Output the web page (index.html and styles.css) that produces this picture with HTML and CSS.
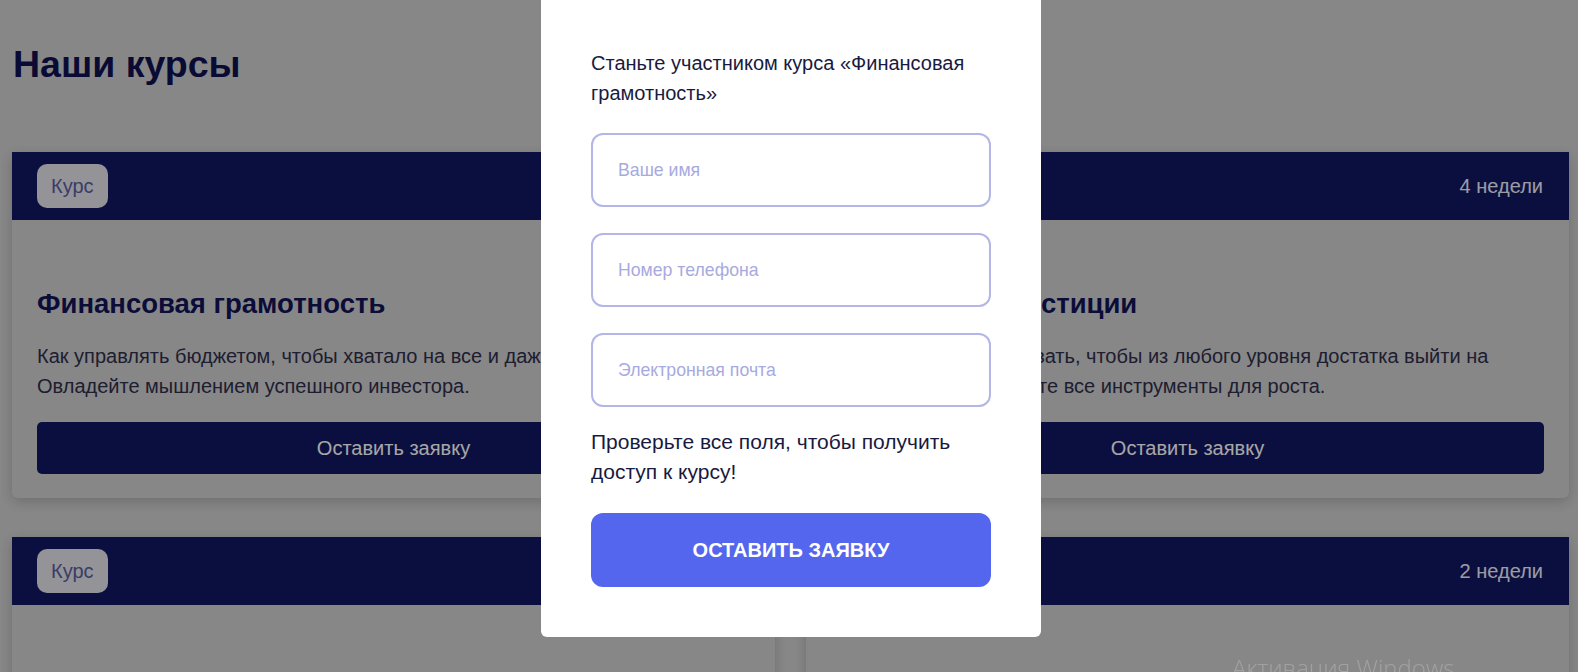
FILE: index.html
```html
<!DOCTYPE html>
<html lang="ru">
<head>
  <meta charset="UTF-8" />
  <meta name="viewport" content="width=device-width, initial-scale=1.0" />
  <title>Наши курсы</title>
  <link rel="stylesheet" href="styles.css">
</head>
<body>
  <div class="page">
    <h1 class="page-title">Наши курсы</h1>

    <div class="courses">
      <div class="course">
        <div class="course-head">
          <span class="course-tag">Курс</span>
          <span class="course-time">6 недель</span>
        </div>
        <div class="course-body">
          <h2>Финансовая грамотность</h2>
          <p>Как управлять бюджетом, чтобы хватало на все и даже на путешествия. Овладейте мышлением успешного инвестора.</p>
          <button class="course-btn">Оставить заявку</button>
        </div>
      </div>

      <div class="course">
        <div class="course-head">
          <span class="course-tag">Курс</span>
          <span class="course-time">4 недели</span>
        </div>
        <div class="course-body">
          <h2>Разумные инвестиции</h2>
          <p>Как удачно инвестировать, чтобы из любого уровня достатка выйти на высокий доход. Освойте все инструменты для роста.</p>
          <button class="course-btn">Оставить заявку</button>
        </div>
      </div>

      <div class="course">
        <div class="course-head">
          <span class="course-tag">Курс</span>
          <span class="course-time">3 недели</span>
        </div>
        <div class="course-body">
          <h2>Личный бюджет</h2>
          <p>Как планировать расходы и копить без стресса. Составьте свой первый финансовый план.</p>
          <button class="course-btn">Оставить заявку</button>
        </div>
      </div>

      <div class="course">
        <div class="course-head">
          <span class="course-tag">Курс</span>
          <span class="course-time">2 недели</span>
        </div>
        <div class="course-body">
          <h2>Налоги и вычеты</h2>
          <p>Как вернуть часть уплаченных налогов и не переплачивать. Разберитесь в вычетах за один вечер.</p>
          <button class="course-btn">Оставить заявку</button>
        </div>
      </div>
    </div>
  </div>

  <div class="overlay">
    <form class="modal">
      <p class="modal-title">Станьте участником курса «Финансовая грамотность»</p>
      <div class="fields">
        <input class="field" type="text" placeholder="Ваше имя">
        <input class="field" type="tel" placeholder="Номер телефона">
        <input class="field" type="email" placeholder="Электронная почта">
      </div>
      <p class="modal-note">Проверьте все поля, чтобы получить доступ к курсу!</p>
      <button class="modal-btn" type="button">Оставить заявку</button>
    </form>
  </div>

  <div class="watermark">Активация Windows</div>
</body>
</html>
```

FILE: styles.css
```css
body {
  margin: 0;
  font-family: 'Liberation Sans', Arial, sans-serif;
  background: #d0d0d0;
}

.page {
  padding: 42px 9px 40px 12px;
}
.page-title {
  margin: 0 0 66px 1px;
  font-size: 37.5px;
  line-height: 44px;
  color: #0f1252;
}

.courses {
  display: grid;
  grid-template-columns: 1fr 1fr;
  column-gap: 31px;
  row-gap: 39px;
}
.course {
  background: #d0d0d0;
  border-radius: 0 0 6px 6px;
  box-shadow: 0 4px 14px rgba(0, 0, 0, 0.18);
  overflow: hidden;
}
.course-head {
  height: 68px;
  padding: 0 26px 0 25px;
  background: #121762;
  display: flex;
  align-items: center;
  justify-content: space-between;
}
.course-tag {
  padding: 10px 14px;
  border-radius: 10px;
  background: #e3e3ea;
  color: #5a5e9e;
  font-size: 20px;
  line-height: 24px;
}
.course-time {
  color: #f0f0fa;
  font-size: 20px;
}
.course-body {
  padding: 68px 25px 24px;
}
.course-body h2 {
  margin: 0 0 22px;
  font-size: 27.5px;
  line-height: 31px;
  color: #111557;
}
.course-body p {
  margin: 0 0 21px;
  font-size: 20px;
  line-height: 30px;
  color: #2e2e4a;
}
.course-btn {
  display: block;
  width: 100%;
  height: 52px;
  border: none;
  border-radius: 5px;
  background: #121762;
  color: #fff;
  font-family: 'Liberation Sans', Arial, sans-serif;
  font-size: 20px;
}

.overlay {
  position: fixed;
  top: 0;
  right: 0;
  bottom: 0;
  left: 0;
  background: rgba(0, 0, 0, 0.35);
  display: flex;
  justify-content: center;
  align-items: flex-start;
}
.modal {
  width: 500px;
  box-sizing: border-box;
  margin-left: 4px;
  padding: 48px 50px 50px;
  background: #fff;
  border-radius: 0 0 6px 6px;
}
.modal-title {
  margin: 0 0 25px;
  font-size: 20px;
  line-height: 30px;
  color: #181a3f;
}
.fields {
  display: flex;
  flex-direction: column;
  gap: 26px;
}
.field {
  height: 74px;
  box-sizing: border-box;
  padding: 0 25px;
  border: 2px solid #b3b6e6;
  border-radius: 12px;
  font-family: 'Liberation Sans', Arial, sans-serif;
  font-size: 17.7px;
  color: #181a3f;
  outline: none;
}
.field::placeholder {
  color: #a7aadf;
}
.modal-note {
  margin: 20px 0 26px;
  font-size: 21px;
  line-height: 30px;
  color: #181a3f;
}
.modal-btn {
  display: block;
  width: 100%;
  height: 74px;
  border: none;
  border-radius: 12px;
  background: #5566ee;
  color: #fff;
  font-family: 'Liberation Sans', Arial, sans-serif;
  font-size: 20px;
  font-weight: bold;
  text-transform: uppercase;
}

.watermark {
  position: fixed;
  left: 1232px;
  top: 651px;
  font-family: 'Open Sans', sans-serif;
  font-weight: 300;
  font-size: 24px;
  color: rgba(255, 255, 255, 0.22);
  pointer-events: none;
}
```
